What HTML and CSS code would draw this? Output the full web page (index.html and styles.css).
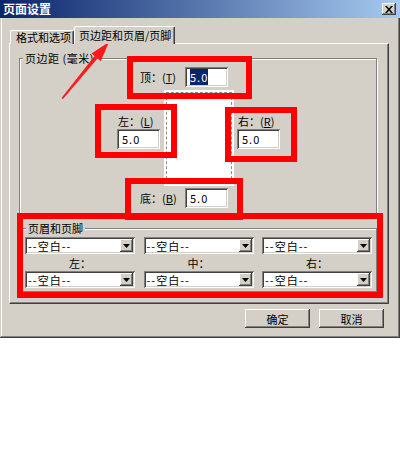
FILE: index.html
```html
<!DOCTYPE html>
<html>
<head>
<meta charset="utf-8">
<link rel="stylesheet" href="styles.css">
</head>
<body>
<div class="dialog">
  <div class="titlebar">
    <span class="title">页面设置</span>
    <span class="close"><svg width="8" height="7" viewBox="0 0 8 7"><path d="M0 0h2l2 2.4L6 0h2L5 3.5 8 7H6L4 4.6 2 7H0l3-3.5z" fill="#000"/></svg></span>
  </div>
  <div class="tabs">
    <div class="tab">格式和选项</div>
    <div class="tab active">页边距和页眉/页脚</div>
  </div>
  <div class="panel">
    <fieldset class="group margins">
      <legend>页边距 (毫米)</legend>
      <div class="mrow">
        <span class="lbl">顶：(<u>T</u>)</span>
        <div class="input"><span class="sel">5.0</span></div>
      </div>
      <div class="mid">
        <div class="side">
          <div class="slbl">左：(<u>L</u>)</div>
          <div class="input">5.0</div>
        </div>
        <div class="preview"><div class="dash"></div></div>
        <div class="side">
          <div class="slbl">右：(<u>R</u>)</div>
          <div class="input">5.0</div>
        </div>
      </div>
      <div class="mrow low">
        <span class="lbl">底：(<u>B</u>)</span>
        <div class="input">5.0</div>
      </div>
    </fieldset>
    <fieldset class="group hf">
      <legend>页眉和页脚</legend>
      <div class="hfgrid">
        <div class="select"><span class="stext">--空白--</span><span class="dd"><svg width="7" height="4" viewBox="0 0 7 4"><path d="M0 0h7L3.5 4z" fill="#000"/></svg></span></div>
        <div class="select"><span class="stext">--空白--</span><span class="dd"><svg width="7" height="4" viewBox="0 0 7 4"><path d="M0 0h7L3.5 4z" fill="#000"/></svg></span></div>
        <div class="select"><span class="stext">--空白--</span><span class="dd"><svg width="7" height="4" viewBox="0 0 7 4"><path d="M0 0h7L3.5 4z" fill="#000"/></svg></span></div>
        <div class="hlbl">左：</div>
        <div class="hlbl">中：</div>
        <div class="hlbl">右：</div>
        <div class="select"><span class="stext">--空白--</span><span class="dd"><svg width="7" height="4" viewBox="0 0 7 4"><path d="M0 0h7L3.5 4z" fill="#000"/></svg></span></div>
        <div class="select"><span class="stext">--空白--</span><span class="dd"><svg width="7" height="4" viewBox="0 0 7 4"><path d="M0 0h7L3.5 4z" fill="#000"/></svg></span></div>
        <div class="select"><span class="stext">--空白--</span><span class="dd"><svg width="7" height="4" viewBox="0 0 7 4"><path d="M0 0h7L3.5 4z" fill="#000"/></svg></span></div>
      </div>
    </fieldset>
  </div>
  <div class="buttons">
    <button class="btn">确定</button>
    <button class="btn">取消</button>
  </div>

  <div class="redbox r-top"></div>
  <div class="redbox r-left"></div>
  <div class="redbox r-right"></div>
  <div class="redbox r-bottom"></div>
  <div class="redbox r-hf"></div>
  <svg class="arrow" width="400" height="338" viewBox="0 0 400 338">
    <path d="M61.5 98 L63 99 L97.5 58.5 L94.5 56 Z" fill="#ff1a1a"/>
    <path d="M109 42 L100.7 61.2 L91.5 53.4 Z" fill="#ff1a1a"/>
  </svg>
</div>
</body>
</html>
```
FILE: styles.css
```css
body {
  margin: 0;
  background: #fff;
  font-family: "SimSun", "Noto Sans CJK SC", "Noto Sans", sans-serif;
  font-size: 11px;
  line-height: 12px;
  color: #000;
}

.dialog {
  position: relative;
  width: 400px;
  height: 338px;
  background: #d4d0c8;
  box-shadow: inset -1px -1px #404040, inset 1px 1px #d4d0c8, inset -2px -2px #808080, inset 2px 2px #fff;
  display: flex;
  flex-direction: column;
}

.titlebar {
  height: 18px;
  flex: none;
  background: linear-gradient(90deg, #0a246a, #a6caf0);
  display: flex;
  align-items: center;
  justify-content: space-between;
  padding: 0 4px 0 3px;
  color: #fff;
  font-weight: bold;
  font-size: 12px;
}

.close {
  width: 14px;
  height: 12px;
  background: #d4d0c8;
  box-shadow: inset -1px -1px #404040, inset 1px 1px #fff, inset -2px -2px #808080;
  display: flex;
  align-items: center;
  justify-content: center;
}

.tabs {
  display: flex;
  align-items: flex-end;
  height: 18px;
  margin-top: 8px;
  margin-bottom: -1px;
  padding-left: 10px;
  position: relative;
  z-index: 1;
}

.tab {
  box-sizing: border-box;
  height: 14px;
  width: 64px;
  padding-left: 5px;
  line-height: 13px;
  border-top: 1px solid #fff;
  border-left: 1px solid #fff;
  border-right: 1px solid #404040;
  border-radius: 2px 2px 0 0;
  box-shadow: inset -1px 0 #808080;
  background: #d4d0c8;
}

.tab.active {
  height: 18px;
  width: 101px;
  padding-left: 4px;
  padding-top: 2px;
}

.panel {
  margin-left: 9px;
  width: 380px;
  height: 261px;
  box-sizing: border-box;
  border-top: 1px solid #fff;
  border-left: 1px solid #fff;
  border-right: 1px solid #404040;
  border-bottom: 1px solid #404040;
  box-shadow: inset -1px -1px #808080;
  flex: none;
}

.group {
  margin: 0;
  padding: 0;
  border: 1px solid #808080;
  box-shadow: inset 1px 1px #fff, 1px 1px #fff;
  box-sizing: border-box;
  min-width: 0;
}

.group legend {
  padding: 0 2px;
  line-height: 12px;
  background: #d4d0c8;
}

.margins {
  margin: 8px 0 0 9px;
  width: 358px;
  padding: 3px 0 8px 0;
}

.margins legend {
  margin-left: 3px;
  letter-spacing: 0.5px;
}

.mrow {
  display: flex;
  align-items: center;
  margin-left: 120px;
  height: 20px;
}

.mrow.low {
  margin-top: 2px;
}

.lbl {
  width: 45px;
}

.input {
  box-sizing: border-box;
  width: 43px;
  height: 20px;
  background: #fff;
  box-shadow: inset 1px 1px #808080, inset -1px -1px #fff, inset 2px 2px #404040, inset -2px -2px #d4d0c8;
  padding: 4px 4px 0 5px;
  line-height: 12px;
  letter-spacing: 1px;
}

.sel {
  background: #0a246a;
  color: #fff;
}

.mid {
  display: flex;
  margin: 3px 0 0 97px;
  height: 96px;
}

.side {
  width: 43px;
  padding-top: 25px;
}

.slbl {
  padding-left: 1px;
  margin-bottom: 2px;
}

.preview {
  box-sizing: border-box;
  width: 70px;
  margin: 0 3px 0 4px;
  padding: 2px;
  background: #fff;
}

.dash {
  box-sizing: border-box;
  height: 100%;
  border: 1px dashed #8a8a8a;
}

.hf {
  margin: 5px 0 0 11px;
  width: 356px;
  padding: 3px 0 3px 3px;
}

.hf legend {
  margin-left: 1px;
}

.hfgrid {
  display: grid;
  grid-template-columns: 110px 110px 110px;
  grid-template-rows: 17px 17px 17px;
  column-gap: 8.5px;
}

.select {
  box-sizing: border-box;
  height: 17px;
  background: #fff;
  box-shadow: inset 1px 1px #808080, inset -1px -1px #fff, inset 2px 2px #404040, inset -2px -2px #d4d0c8;
  display: flex;
  align-items: center;
  justify-content: space-between;
  padding: 2px 2px 2px 3px;
}

.stext {
  letter-spacing: 1px;
}

.dd {
  width: 13px;
  height: 13px;
  background: #d4d0c8;
  box-shadow: inset -1px -1px #404040, inset 1px 1px #fff, inset -2px -2px #808080;
  display: flex;
  align-items: center;
  justify-content: center;
}

.hlbl {
  text-align: center;
  padding-top: 3px;
}

.buttons {
  display: flex;
  justify-content: flex-end;
  gap: 9px;
  margin-top: 5px;
  padding-right: 16px;
}

.btn {
  width: 65px;
  height: 19px;
  padding: 0;
  border: 0;
  font: inherit;
  background: #d4d0c8;
  box-shadow: inset -1px -1px #404040, inset 1px 1px #fff, inset -2px -2px #808080;
}

.redbox {
  position: absolute;
  box-sizing: border-box;
  border: 6px solid #ff0000;
}

.r-top { left: 127px; top: 56px; width: 125px; height: 43px; }
.r-left { left: 95px; top: 104px; width: 82px; height: 54px; }
.r-right { left: 225px; top: 107px; width: 72px; height: 55px; }
.r-bottom { left: 125px; top: 178px; width: 118px; height: 42px; }
.r-hf { left: 17px; top: 213px; width: 366px; height: 85px; }

.arrow {
  position: absolute;
  left: 0;
  top: 0;
  pointer-events: none;
}
```
